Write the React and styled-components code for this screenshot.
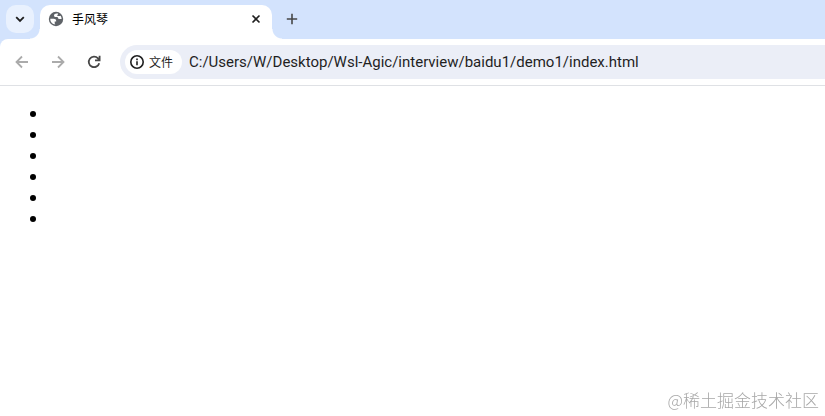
import React from 'react';
import styled, { createGlobalStyle } from 'styled-components';

const colors = {
  frame: '#d3e3fd',
  frameButton: '#e9f1fe',
  surface: '#ffffff',
  field: '#ebeef7',
  line: '#dfe1e5',
  text: '#1f1f1f',
  icon: '#474747',
  iconDisabled: '#ababab',
};

const GlobalStyle = createGlobalStyle`
  * {
    box-sizing: border-box;
  }
  body {
    margin: 0;
    background-color: ${colors.surface};
    color: #000;
    font-family: Roboto, 'Noto Sans CJK SC', sans-serif;
  }
`;

const Window = styled.div`
  display: flex;
  flex-direction: column;
  min-height: 100vh;
`;

const IconButton = styled.button`
  display: flex;
  align-items: center;
  justify-content: center;
  width: 28px;
  height: 28px;
  padding: 0;
  border: none;
  background: none;
`;

const TabStrip = styled.div`
  display: flex;
  align-items: flex-start;
  height: 39px;
  padding: 5px 6px 0;
  background-color: ${colors.frame};
`;

const TabSearch = styled(IconButton)`
  margin-right: 6px;
  border-radius: 10px;
  background-color: ${colors.frameButton};
`;

const Tab = styled.div`
  position: relative;
  display: flex;
  align-items: center;
  flex: 0 1 232px;
  height: 34px;
  padding: 0 8px 6px;
  border-radius: 10px 10px 0 0;
  background-color: ${colors.surface};
  &::before,
  &::after {
    content: '';
    position: absolute;
    bottom: 0;
    width: 10px;
    height: 10px;
  }
  &::before {
    right: 100%;
    background: radial-gradient(circle at 0 0, transparent 9px, ${colors.surface} 10px);
  }
  &::after {
    left: 100%;
    background: radial-gradient(circle at 100% 0, transparent 9px, ${colors.surface} 10px);
  }
`;

const TabTitle = styled.span`
  flex: 1;
  margin-left: 8px;
  color: #000;
  font-family: 'Noto Sans CJK SC', sans-serif;
  font-size: 12px;
  line-height: 16px;
`;

const CloseButton = styled(IconButton)`
  width: 16px;
  height: 16px;
`;

const NewTab = styled(IconButton)`
  margin-left: 6px;
`;

const ToolbarFrame = styled.div`
  background-color: ${colors.frame};
`;

const Toolbar = styled.div`
  display: flex;
  align-items: center;
  height: 47px;
  padding-left: 8px;
  border-bottom: 1px solid ${colors.line};
  border-top-left-radius: 8px;
  background-color: ${colors.surface};
`;

const NavButton = styled(IconButton)`
  margin-right: 8px;
  color: ${props => (props.disabled ? colors.iconDisabled : colors.icon)};
`;

const AddressBar = styled.form`
  display: flex;
  align-items: center;
  flex: 1;
  height: 34px;
  margin-left: 4px;
  padding-left: 5px;
  border-radius: 17px 0 0 17px;
  background-color: ${colors.field};
`;

const SchemeChip = styled.button`
  display: flex;
  align-items: center;
  gap: 4px;
  height: 24px;
  padding: 0 9px 0 4px;
  border: none;
  border-radius: 12px;
  background-color: ${colors.surface};
  color: ${colors.text};
  font-family: 'Noto Sans CJK SC', sans-serif;
  font-size: 12px;
  line-height: 16px;
`;

const AddressInput = styled.input`
  flex: 1;
  min-width: 0;
  height: 24px;
  margin-left: 7px;
  padding: 0;
  border: none;
  outline: none;
  background: none;
  color: ${colors.text};
  font-family: inherit;
  font-size: 15px;
`;

const Page = styled.main`
  flex: 1;
  padding: 0 8px;
`;

const List = styled.ul`
  margin: 17px 0;
  padding-left: 40px;
  font-family: 'Open Sans', sans-serif;
  font-size: 16px;
  line-height: 21px;
`;

const Watermark = styled.div`
  position: fixed;
  right: 6px;
  bottom: 4px;
  color: #a8a8a8;
  font-family: 'Noto Sans CJK SC', sans-serif;
  font-size: 17px;
  font-weight: 300;
  line-height: 24px;
`;

const GlobeIcon = () => (
  <svg width='16' height='16' viewBox='0 0 16 16' aria-hidden='true'>
    <circle cx='8' cy='8' r='7.2' fill='#5f6368' />
    <path
      d='M2.300 7.800h3.300c1.600 0 2.600.7 2.600 2v.7H6.700v1.500c0 .8.200 1.200.8 1.500C4.500 13.300 2.100 11 2.300 7.800z'
      fill='#fff'
    />
    <path
      d='M9.200 2.500C7.300 2.300 6 3.200 6 4.500c0 1.200.9 1.600 2.100 1.600h1.600c0 1.200.6 1.900 1.700 1.900h2.200c0-1.300-.4-2.300-1-3.200-.5.300-.9.300-1.500.3H9.300V4.200c.6-.3.700-1 .7-1.600z'
      fill='#fff'
    />
  </svg>
);

const bullets = [1, 2, 3, 4, 5, 6];

const App = () => (
  <Window>
    <GlobalStyle />
    <TabStrip>
      <TabSearch type='button' aria-label='搜索标签页'>
        <svg width='10' height='10' viewBox='0 0 10 10' fill='none' stroke={colors.text} strokeWidth='1.8'>
          <path d='M1.200 3.200 5 7l3.800-3.800' />
        </svg>
      </TabSearch>
      <Tab>
        <GlobeIcon />
        <TabTitle>手风琴</TabTitle>
        <CloseButton type='button' aria-label='关闭'>
          <svg width='10' height='10' viewBox='0 0 10 10' stroke={colors.text} strokeWidth='1.6'>
            <path d='M1.500 1.500l7 7M8.500 1.500l-7 7' />
          </svg>
        </CloseButton>
      </Tab>
      <NewTab type='button' aria-label='新标签页'>
        <svg width='12' height='12' viewBox='0 0 12 12' stroke={colors.icon} strokeWidth='1.6'>
          <path d='M6 .8v10.400M.8 6h10.400' />
        </svg>
      </NewTab>
    </TabStrip>
    <ToolbarFrame>
      <Toolbar>
        <NavButton type='button' aria-label='返回' disabled>
          <svg width='14' height='14' viewBox='0 0 14 14' fill='none' stroke='currentColor' strokeWidth='1.8'>
            <path d='M13 7H2M7 1.500 1.500 7 7 12.500' />
          </svg>
        </NavButton>
        <NavButton type='button' aria-label='前进' disabled>
          <svg width='14' height='14' viewBox='0 0 14 14' fill='none' stroke='currentColor' strokeWidth='1.8'>
            <path d='M1 7h11M7 1.500 12.500 7 7 12.500' />
          </svg>
        </NavButton>
        <NavButton type='button' aria-label='重新加载'>
          <svg width='14' height='14' viewBox='0 0 14 14' fill='none' stroke='currentColor' strokeWidth='1.8'>
            <path d='M12.200 8.200A5.300 5.300 0 1 1 11 3.300l1.300 1.500M12.600.8v4.600H8' />
          </svg>
        </NavButton>
        <AddressBar>
          <SchemeChip type='button'>
            <svg width='16' height='16' viewBox='0 0 16 16' fill='none' stroke={colors.text} strokeWidth='1.6'>
              <circle cx='8' cy='8' r='6.2' />
              <path d='M8 7.200v4M8 4.600v1.600' />
            </svg>
            文件
          </SchemeChip>
          <AddressInput
            type='text'
            aria-label='地址栏'
            defaultValue='C:/Users/W/Desktop/Wsl-Agic/interview/baidu1/demo1/index.html'
          />
        </AddressBar>
      </Toolbar>
    </ToolbarFrame>
    <Page>
      <List>
        {bullets.map(key => (
          <li key={key} />
        ))}
      </List>
    </Page>
    <Watermark>@稀土掘金技术社区</Watermark>
  </Window>
);

export default App;
